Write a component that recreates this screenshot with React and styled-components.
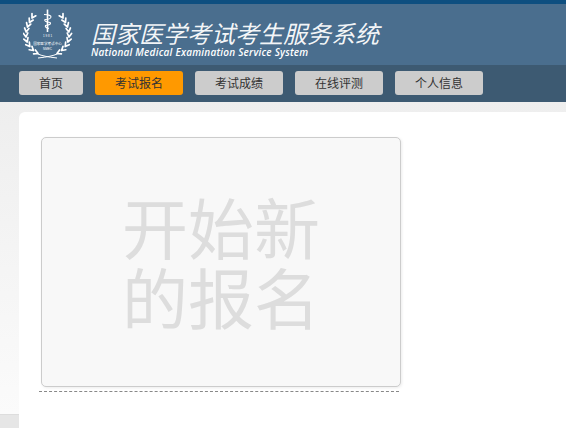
import React from "react";
import styled, { createGlobalStyle } from "styled-components";

const GlobalStyle = createGlobalStyle`
  html, body {
    margin: 0;
    padding: 0;
    background: #fff;
    overflow: hidden;
  }
  * {
    box-sizing: border-box;
  }
`;

const navItems = [
  { label: "首页", narrow: true },
  { label: "考试报名", active: true },
  { label: "考试成绩" },
  { label: "在线评测" },
  { label: "个人信息" },
];

// nodes of the left laurel branch: x, y and the heading of the branch in degrees
const branch = [
  [9, 9, 30],
  [6.5, 13.5, 26],
  [4.5, 18, 18],
  [3.2, 23, 8],
  [3, 28, -6],
  [4.2, 33, -20],
  [6.8, 37.5, -36],
  [10.5, 41.5, -50],
  [15, 44.5, -66],
];

const leafTip = (x, y, deg) => {
  const rad = (deg * Math.PI) / 180;
  return `M${x} ${y}L${(x + Math.sin(rad) * 4.4).toFixed(2)} ${(y - Math.cos(rad) * 4.4).toFixed(2)}`;
};

const Laurel = () => (
  <g stroke="#fff" strokeWidth="1.7" strokeLinecap="round" fill="none">
    {branch.map(([x, y, a]) => (
      <path key={y} d={`${leafTip(x, y, a - 30)}${leafTip(x, y, a + 30)}`} />
    ))}
  </g>
);

const Logo = () => (
  <LogoSvg viewBox="0 0 50 52" width="50" height="52">
    <Laurel />
    <g transform="matrix(-1 0 0 1 49 0)">
      <Laurel />
    </g>
    <path d="M15 45 Q20 47.5 34 49 M34 45 Q29 47.5 15 49" fill="none" stroke="#fff" strokeWidth="1" />
    <path d="M24.5 0.5 V23" stroke="#fff" strokeWidth="1.6" />
    <path
      d="M21 5.5 Q28.5 6 28 8 Q27.5 10.5 22 10.5 Q20.5 12.5 27 13.5 Q29 15.5 22.5 16.5 Q21.5 18.5 26 19.5"
      fill="none"
      stroke="#fff"
      strokeWidth="1.1"
    />
    <LogoYear x="24.5" y="27.5">1 9 8 1</LogoYear>
    <LogoName x="24.5" y="35.5">国家医学考试中心</LogoName>
    <LogoYear x="24.5" y="40.5">NMEC</LogoYear>
  </LogoSvg>
);

const App = () => (
  <>
    <GlobalStyle />
    <Page>
      <Header>
        <Logo />
        <TitleBlock>
          <Title>国家医学考试考生服务系统</Title>
          <Subtitle>National Medical Examination Service System</Subtitle>
        </TitleBlock>
      </Header>
      <NavBar>
        {navItems.map((item) => (
          <NavButton key={item.label} $narrow={item.narrow} $active={item.active}>
            {item.label}
          </NavButton>
        ))}
      </NavBar>
      <Content>
        <Card>
          <TileRow>
            <Tile>
              <TileText>
                开始新
                <br />
                的报名
              </TileText>
            </Tile>
          </TileRow>
        </Card>
      </Content>
    </Page>
  </>
);

export default App;

const Page = styled.div`
  width: 566px;
  height: 428px;
  overflow: hidden;
  font-family: "Liberation Sans", "Noto Sans CJK SC", sans-serif;
`;

const Header = styled.header`
  height: 65px;
  background: #4a6e8e;
  border-top: 4px solid #0e4f80;
  display: flex;
  align-items: flex-start;
  padding: 5px 0 0 23px;
`;

const LogoSvg = styled.svg`
  display: block;
  flex: none;
`;

const LogoYear = styled.text`
  fill: #fff;
  font-family: "Liberation Sans", sans-serif;
  font-size: 3px;
  text-anchor: middle;
`;

const LogoName = styled.text`
  fill: #fff;
  font-family: "Noto Sans CJK SC", sans-serif;
  font-size: 3.6px;
  text-anchor: middle;
`;

const TitleBlock = styled.div`
  margin-left: 18px;
  padding-top: 11px;
  color: #fff;
`;

const Title = styled.div`
  color: rgba(255, 255, 255, 0.94);
  font-family: "Noto Sans CJK SC", sans-serif;
  font-size: 24px;
  font-weight: 400;
  font-style: italic;
  line-height: 26px;
  white-space: nowrap;
`;

const Subtitle = styled.div`
  font-family: "Open Sans", sans-serif;
  font-size: 10px;
  font-weight: 600;
  font-style: italic;
  line-height: 12px;
  letter-spacing: 0.22px;
  white-space: nowrap;
`;

const NavBar = styled.nav`
  height: 37px;
  background: #3d5a72;
  display: flex;
  gap: 12px;
  padding: 6px 0 0 19px;
`;

const NavButton = styled.a`
  width: ${(p) => (p.$narrow ? "64px" : "88px")};
  height: 24px;
  border-radius: 3px;
  background: ${(p) => (p.$active ? "#ff9900" : "#cccccc")};
  color: #333;
  font-family: "Noto Sans CJK SC", sans-serif;
  font-size: 12px;
  line-height: 24px;
  text-align: center;
`;

const Content = styled.main`
  height: 326px;
  padding: 10px 0 0 19px;
  background: linear-gradient(
    to bottom,
    #eeeeee 0,
    #fbfbfb 312px,
    #dddddd 312px,
    #dddddd 313px,
    #e6e6e6 313px
  );
`;

const Card = styled.section`
  height: 100%;
  background: #fff;
  border-top-left-radius: 6px;
  padding: 25px 0 0 20px;
`;

const TileRow = styled.div`
  width: 360px;
  height: 255px;
  border-bottom: 1px dashed #888;
`;

const Tile = styled.div`
  width: 360px;
  height: 250px;
  margin-left: 2px;
  background: #f8f8f8;
  border: 1px solid #ccc;
  border-radius: 5px;
  box-shadow: 1px 1px 3px rgba(0, 0, 0, 0.08);
  display: flex;
  align-items: center;
  justify-content: center;
`;

const TileText = styled.div`
  color: #dddddd;
  font-family: "Noto Sans CJK SC", sans-serif;
  font-size: 66px;
  font-weight: 400;
  line-height: 70px;
  margin-top: -4px;
  white-space: nowrap;
`;
